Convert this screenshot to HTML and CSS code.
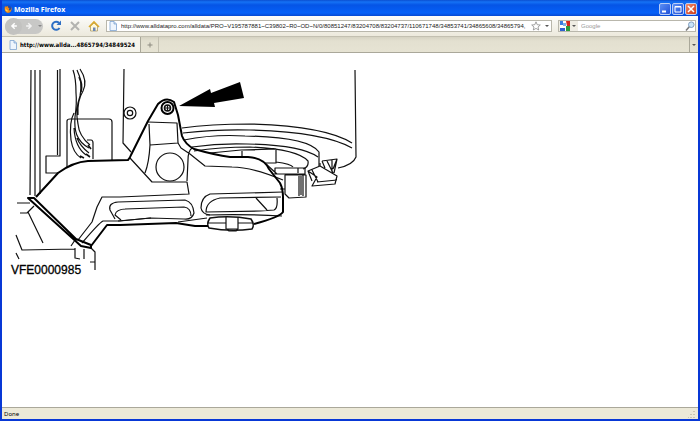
FILE: index.html
```html
<!DOCTYPE html>
<html lang="en">
<head>
  <meta charset="UTF-8">
  <title>Mozilla Firefox</title>
  <link rel="stylesheet" href="styles.css">
</head>
<body>
  <div class="window">
    <header class="titlebar">
      <svg class="logo" viewBox="0 0 16 16">
        <circle cx="8" cy="8" r="7" fill="#244a9c"/>
        <path d="M2 2Q3 4 5 3Q9 1 8 5L11 7Q8 11 12 11Q15 9 14 3Q18 14 8 16Q-1 14 2 2Z" fill="#f28a16"/>
        <path d="M3 6Q5 11 9 12Q6 14 3 11Z" fill="#ffd65a"/>
      </svg>
      <h1>Mozilla Firefox</h1>
      <div class="winbuttons">
        <button aria-label="Minimize"><svg viewBox="0 0 10 10"><path d="M2 7.500H6" stroke="#fff" stroke-width="2"/></svg></button>
        <button aria-label="Maximize"><svg viewBox="0 0 10 10"><path d="M2 2.500H8V8H2ZM2 3H8" fill="none" stroke="#fff"/></svg></button>
        <button class="close" aria-label="Close"><svg viewBox="0 0 10 10"><path d="M2 2L8 8M8 2L2 8" stroke="#fff" stroke-width="1.500"/></svg></button>
      </div>
    </header>

    <nav class="toolbar">
      <div class="history">
        <button class="back" aria-label="Back"><svg viewBox="0 0 14 14"><path d="M8 3L4 7L8 11M4 7H11" fill="none" stroke="#fff" stroke-width="2"/></svg></button>
        <button aria-label="Forward"><svg viewBox="0 0 14 14"><path d="M6 3L10 7L6 11M3 7H10" fill="none" stroke="#f3f3f3" stroke-width="2"/></svg></button>
        <button class="drop" aria-label="Recent pages"><svg viewBox="0 0 6 6"><path d="M1 2H5L3 4Z" fill="#888"/></svg></button>
      </div>
      <button class="tool" aria-label="Reload"><svg viewBox="0 0 12 12"><path d="M9 3A4 4 0 1 0 9.500 8" fill="none" stroke="#2e6fc4" stroke-width="2"/><path d="M6.500 5H11V0.500Z" fill="#2e6fc4"/></svg></button>
      <button class="tool" aria-label="Stop"><svg viewBox="0 0 12 12"><path d="M2 2L10 10M10 2L2 10" stroke="#b3b3b0" stroke-width="2"/></svg></button>
      <button class="tool" aria-label="Home"><svg viewBox="0 0 12 12"><path d="M2.500 6V11H9.500V6L6 3Z" fill="#fff8d8" stroke="#a99a68" stroke-width=".8"/><path d="M1 7L6 2L11 7" fill="none" stroke="#d9a92c" stroke-width="1.600"/><path d="M5 11V7.500H7.500V11Z" fill="#6a86b8"/></svg></button>
      <form class="address">
        <svg class="page" viewBox="0 0 10 10"><path d="M2 .5H6L8.500 3V9.500H2Z" fill="#eef5fd" stroke="#7da3d0" stroke-width=".8"/><path d="M6 .5V3H8.500" fill="#c8dcf2" stroke="#7da3d0" stroke-width=".8"/></svg>
        <input type="text" aria-label="Address" value="http://www.alldatapro.com/alldata/PRO~V195787881~C39802~R0~OD~N/0/80851247/83204708/83204737/110671748/34853741/34865608/34865794,">
        <button type="button" aria-label="Bookmark"><svg viewBox="0 0 10 10"><path d="M5 .8L6.200 3.700L9.300 4L7 6L7.700 9L5 7.400L2.300 9L3 6L.7 4L3.800 3.700Z" fill="#fff" stroke="#8a8a8a" stroke-width=".8"/></svg></button>
        <button class="drop" type="button" aria-label="History"><svg viewBox="0 0 6 6"><path d="M1 2H5L3 4Z" fill="#555"/></svg></button>
      </form>
      <form class="search">
        <button class="engine" type="button" aria-label="Search engine">
          <svg viewBox="0 0 10 10"><path d="M0 0H10V10H0Z" fill="#fff"/><path d="M0 0H3V4H0Z" fill="#3b7de0"/><path d="M0 7H5V10H0Z" fill="#2f62cf"/><path d="M6 0H10V5H7Z" fill="#d5281f"/><path d="M6 5H10V10H6Z" fill="#2c9b3c"/><path d="M3 2H6V5H3Z" fill="#78b0ea"/></svg>
          <svg class="arrow" viewBox="0 0 6 6"><path d="M1 2H5L3 4Z" fill="#555"/></svg>
        </button>
        <input type="text" aria-label="Search" placeholder="Google">
        <button type="submit" aria-label="Go"><svg viewBox="0 0 10 10"><path d="M1 9.500L4.500 5.500" stroke="#777" stroke-width="1.500"/><circle cx="6.300" cy="3.700" r="2.800" fill="#c9e3f8" stroke="#7795b8" stroke-width=".9"/></svg></button>
      </form>
    </nav>

    <div class="tabs">
      <button class="tab">
        <svg class="page" viewBox="0 0 10 10"><path d="M2 .5H6L8.500 3V9.500H2Z" fill="#eef5fd" stroke="#7da3d0" stroke-width=".8"/><path d="M6 .5V3H8.500" fill="#c8dcf2" stroke="#7da3d0" stroke-width=".8"/></svg>
        <span>http://www.allda...4865794/34849524</span>
      </button>
      <button class="newtab" aria-label="New tab"><svg viewBox="0 0 6 6"><path d="M3 .5V5.500M.5 3H5.500" stroke="#8d8b80"/></svg></button>
      <button class="alltabs" aria-label="List all tabs"><svg viewBox="0 0 6 6"><path d="M1 2H5L3 4Z" fill="#555"/></svg></button>
    </div>

    <main class="content">
      <svg class="diagram" viewBox="10 60 350 220" role="img" aria-label="VFE0000985">
        <!-- panel and wiring on the left -->
        <g class="line">
          <path d="M31 70L30 195M35 70V196M40 70V194M57.500 70V155M60 69V156H46V173H58"/>
          <path d="M67 168V121Q67 119 70 119H109Q112 119 112 122V160M87 140H91Q93 140 93 143V159"/>
          <path d="M73 70Q76 78 76 93Q77 103 75 117C74 130 76 141 89 148M77 70Q83 82 80 96Q75 110 78 124Q79 136 90 145M80 69Q88 81 83 91Q77 101 78 115M74 113Q69 122 71 140Q73 153 81 158M74 128Q75 147 86 155M77 138Q80 146 89 153"/>
          <path class="mid" d="M79 77Q83 84 81 92M88 145L91 149M86 154L90 157M80 156L84 158"/>
        </g>
        <!-- blower housing -->
        <g class="line">
          <path d="M124 69L123 143L131 152M355 70L356 157Q353 165 338 168"/>
          <circle cx="130" cy="113" r="6"/><circle cx="130" cy="113" r="2.700"/>
          <path d="M182 128Q210 124 250 124Q325 126 352 143M183 133Q220 129 250 130Q324 132 352 148M184 140Q214 134 245 136Q308 137 319 152V166"/>
          <path d="M192 147Q220 143 247 144Q301 145 318 157M194 151Q220 147 250 147Q297 149 308 161Q309 167 303 169M210 153L241 150L276 149V163L265 163M242 151V157M276 162Q291 164 293 167"/>
          <path d="M275 168H305V174H275ZM298 168V173M266 164L277 174M285 175H306V197L289 198L285 194ZM299 176V196M301 176V195M303 175V196M285 189H280"/>
          <path d="M308 171L320 166L337 176L335 184L312 186L317 177ZM308 171L312 181M337 180L317 182M320 166V163M312 170L318 182M322 161L337 159L334 173M322 161L325 168M327 161L333 173M332 160V172M337 159L333 169"/>
        </g>
        <!-- duct detail -->
        <g class="line">
          <path d="M148 122L177 123L178 143L150 145L149 124M150 145Q149 163 145 173M130 158L152 182H187L189 194L120 197H102L97 207L92 222L78 240"/>
          <circle cx="170" cy="167" r="14"/>
          <path d="M178 143L181 148L190 154L205 166L232 167Q252 167 283 180M192 148Q188 151 188 160L187 181"/>
          <path d="M118 202L185 200Q193 202 194 213Q192 220 184 219L150 218L120 221H103Q99 223 82 243M118 202Q108 203 110 210L115 219"/>
          <path d="M126 209Q116 209 115 215L121 220M125 209L184 207Q191 208 191 216M283 192L210 194Q201 197 201 208Q202 214 210 215"/>
          <path d="M281 197L220 198Q206 201 206 212L260 211L274 210Q278 208 277 198M256 198L267 210M206 215Q247 214 282 216M178 222L207 218M118 221L151 218"/>
          <path class="mid" d="M210 218Q230 215 251 219Q255 225 252 229Q230 232 209 228Q206 224 210 218Z"/>
          <path d="M226 217V229H238V217M208 223H226M238 223H252M227 229L229 231H236L238 229"/>
        </g>
        <!-- lower left bracket -->
        <path class="line" d="M17 203H30M20 213H27L34 206M28 212L43 243M16 235L22 250L75 249M16 253L19 259M75 248V258L80 259M84 249V259M91 248L95 252V270M90 262H95M71 246L75 240"/>
        <!-- duct outline -->
        <path class="bold" d="M36 197L58 173Q73 162 88 161L128 160Q130 158 131 155L148 121L158 104Q166 96 174 102L178 115L182 136Q185 144 194 149Q215 155 230 157H248Q264 158 269 169L280 183Q283 189 283 197V212Q280 217 254 224"/>
        <path class="bold" d="M208 226L195 226L176 223L120 225H107L91 246"/>
        <path class="bold" d="M28 198L34 198L76 239L91 245V248L81 246Z"/>
        <!-- bolt and pointer -->
        <circle class="bold" cx="167.500" cy="108" r="6"/>
        <circle class="mid" cx="167.500" cy="108" r="3"/>
        <path class="line" d="M164 108H171M167.500 105V111"/>
        <path d="M179 106L210 89L211 93L240 82L244 98L214 103L215 107Z"/>
        <text x="11" y="274">VFE0000985</text>
      </svg>
    </main>

    <footer class="statusbar">
      <span>Done</span>
      <svg class="grip" viewBox="0 0 8 8"><path d="M6 1V2M6 4V5M3 4V5M6 7V8M3 7V8M0 7V8" stroke="#bdb9a4" stroke-width="1.500"/></svg>
    </footer>
  </div>
</body>
</html>
```
FILE: styles.css
```css
* {
  box-sizing: border-box;
}
body {
  margin: 0;
  background: #0831d9;
  font-family: "Noto Sans", Tahoma, sans-serif;
  font-size: 6px;
  color: #000;
}
button {
  display: flex;
  align-items: center;
  justify-content: center;
  flex: none;
  padding: 0;
  border: 0;
  background: none;
  font: inherit;
}
svg {
  display: block;
  flex: none;
}
button svg,
.page {
  width: 10px;
  height: 10px;
}
input {
  flex: 1;
  min-width: 0;
  padding: 0;
  border: 0;
  outline: 0;
  background: none;
  font: 6px "Liberation Sans", Arial, sans-serif;
  color: #222;
}
input::placeholder {
  color: #999;
}
.window {
  display: flex;
  flex-direction: column;
  min-height: 100vh;
  border: 2px solid #0838d6;
  border-top: 0;
}
.titlebar {
  display: flex;
  align-items: center;
  height: 16px;
  padding: 2px 1px 0 2px;
  background: linear-gradient(#0b4fd0, #1572f5 2px, #0554e6 5px, #0560f8 13px, #0648d0);
}
.logo {
  width: 8px;
  height: 8px;
}
.titlebar h1 {
  flex: 1;
  margin: 0 0 0 2px;
  font: bold 7px "Open Sans", sans-serif;
  color: #fff;
}
.winbuttons {
  display: flex;
  gap: 1px;
}
.winbuttons button {
  width: 12px;
  height: 12px;
  border: 1px solid #b9cdf6;
  border-radius: 2px;
  background: linear-gradient(135deg, #5b8ff5, #1f50d8);
}
.winbuttons .close {
  background: linear-gradient(135deg, #f08a6a, #cf3a15);
}
.toolbar {
  display: flex;
  align-items: center;
  gap: 6px;
  height: 21px;
  padding: 0 2px 0 3px;
  background: linear-gradient(#fcfcfa, #ece9dc);
  border-bottom: 1px solid #c3c0b1;
}
.history {
  display: flex;
  align-items: center;
  height: 15px;
  border-radius: 8px;
  background: #c8c8c6;
}
.history .back {
  width: 17px;
  height: 17px;
  border-radius: 50%;
  background: #c2c2c0;
}
.history button {
  width: 14px;
}
.history .drop {
  width: 7px;
}
.tool {
  width: 13px;
}
.tool svg {
  width: 12px;
  height: 12px;
}
.drop svg,
.arrow,
.newtab svg,
.alltabs svg {
  width: 6px;
  height: 6px;
}
.address,
.search {
  display: flex;
  align-items: center;
  height: 12px;
  border: 1px solid #b9b7ac;
  background: #fff;
}
.address {
  flex: 1;
  gap: 3px;
  padding: 0 1px;
}
.search {
  width: 138px;
  gap: 3px;
}
.engine {
  height: 10px;
  padding: 0 1px;
  gap: 1px;
  background: #efede4;
}
.engine .arrow {
  width: 6px;
  height: 6px;
}
.tabs {
  display: flex;
  height: 16px;
  background: linear-gradient(#d5d2c2, #e3e0d0 4px, #e6e3d3);
  border-bottom: 1px solid #aaa89a;
}
.tab {
  gap: 2px;
  justify-content: flex-start;
  width: 139px;
  padding: 0 0 0 6px;
  border-right: 1px solid #aaa89a;
  background: #f5f4ec;
  font: bold 6px "DejaVu Sans Condensed", "DejaVu Sans", sans-serif;
  white-space: nowrap;
}
.newtab {
  width: 18px;
  border-right: 1px solid #c3c0b1;
}
.alltabs {
  width: 9px;
  margin-left: auto;
  border-left: 1px solid #aaa89a;
}
.content {
  flex: 1;
  padding: 7px 8px;
  background: #fff;
}
.diagram {
  width: 350px;
  height: 220px;
  max-width: 100%;
}
.diagram text {
  font: 12px "Liberation Sans", Arial, sans-serif;
  stroke: #000;
  stroke-width: 0.3;
}
.line,
.bold,
.mid {
  fill: none;
  stroke: #111;
  stroke-width: 1.2;
  stroke-linejoin: round;
}
.mid {
  stroke-width: 1.6;
}
.bold {
  stroke: #000;
  stroke-width: 2;
}
.statusbar {
  display: flex;
  align-items: center;
  justify-content: space-between;
  height: 12px;
  padding: 0 2px;
  border-top: 1px solid #aaa89a;
  background: #ece9d8;
}
.grip {
  width: 8px;
  height: 8px;
}
```
